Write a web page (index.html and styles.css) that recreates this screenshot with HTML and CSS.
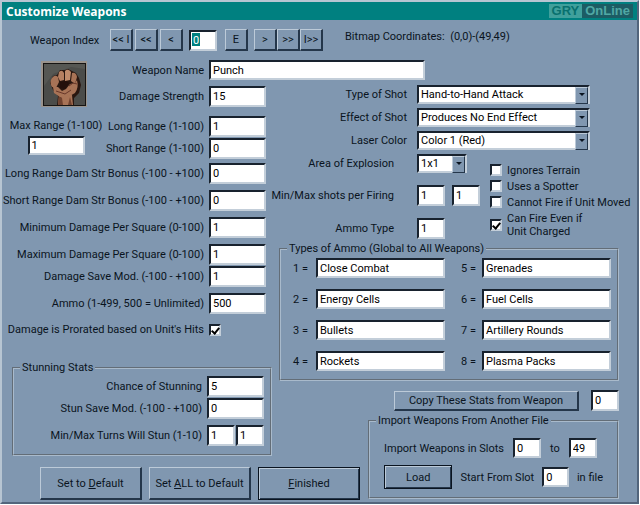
FILE: index.html
```
<!DOCTYPE html>
<html lang="en">

<head>
    <meta charset="UTF-8">
    <meta name="viewport" content="width=device-width, initial-scale=1.0">
    <title>Customize Weapons</title>
    <link rel="stylesheet" href="styles.css">
</head>

<body>
    <form class="window">
        <header class="titlebar">
            <h1>Customize Weapons</h1>
            <div class="brand"><span class="brand-left">GRY</span><span class="brand-right">OnLine</span></div>
        </header>

        <div class="toolbar">
            <label class="index-label" for="weaponIndex">Weapon Index</label>
            <div class="nav">
                <button type="button">&lt;&lt; I</button>
                <button type="button">&lt;&lt;</button>
                <button type="button">&lt;</button>
            </div>
            <input type="text" id="weaponIndex" class="small selected" value="0">
            <button type="button" class="edit">E</button>
            <div class="nav nav-next">
                <button type="button">&gt;</button>
                <button type="button">&gt;&gt;</button>
                <button type="button">I&gt;&gt;</button>
            </div>
            <span class="coords">Bitmap Coordinates:&nbsp; (0,0)-(49,49)</span>
        </div>

        <main class="content">
            <section class="left">
                <div class="top">
                    <div class="side">
                        <svg class="portrait" viewBox="0 0 46 46" aria-label="Punch">
                            <rect width="46" height="46" fill="#9a938c"/>
                            <rect x="2" y="2" width="43" height="43" fill="#161412"/>
                            <rect x="3" y="3" width="41" height="41" fill="#4b4c49"/>
                            <path d="M3 3h41v5L30 6 12 13 3 25z" fill="#565753"/>
                            <path d="M16 44l1-9-5-6-3-7 3-7 4-1 3-5 5 0 3-1 4 2 4 2 3 5 2 7-2 8-5 5 0 7z" fill="#2a1710"/>
                            <path d="M17 44l1-10h13l1 10z" fill="#a87356"/>
                            <path d="M18 34l3 3 1 7h-5zM29 36l2 8h-4z" fill="#70422f"/>
                            <path d="M11 17q3-4 6-1l1 5-3 6-4-1q-3-5 0-9z" fill="#a87356"/>
                            <path d="M18 11q3-3 5 1l0 7-4 1-2-4z" fill="#b57f60"/>
                            <path d="M24 10q3-3 6 1l-1 8-5 1z" fill="#c08b6b"/>
                            <path d="M31 12q4-1 5 4l-2 7-4-3z" fill="#a87356"/>
                            <path d="M12 26l5 0 4 4 4-2 4-5 5-1 2-3q2 8-2 13l-7 4h-8l-6-4z" fill="#a87356"/>
                            <path d="M19 21l6-1 3 2-4 6-5-1z" fill="#24100b"/>
                            <path d="M15 30l6 2 3 1 6-4M28 25l4-3 4 1" fill="none" stroke="#68382a"/>
                        </svg>
                        <label for="maxRange">Max Range (1-100)</label>
                        <input type="text" id="maxRange" value="1">
                    </div>
                    <div class="fields">
                        <div class="row name-row">
                            <label for="weaponName">Weapon Name</label>
                            <input type="text" id="weaponName" value="Punch">
                        </div>
                        <div class="row">
                            <label for="strength">Damage Strength</label>
                            <input type="text" id="strength" value="15">
                        </div>
                        <div class="row spaced">
                            <label for="longRange">Long Range (1-100)</label>
                            <input type="text" id="longRange" value="1">
                        </div>
                        <div class="row tight">
                            <label for="shortRange">Short Range (1-100)</label>
                            <input type="text" id="shortRange" value="0">
                        </div>
                    </div>
                </div>
                <div class="row">
                    <label for="longBonus">Long Range Dam Str Bonus (-100 - +100)</label>
                    <input type="text" id="longBonus" value="0">
                </div>
                <div class="row">
                    <label for="shortBonus">Short Range Dam Str Bonus (-100 - +100)</label>
                    <input type="text" id="shortBonus" value="0">
                </div>
                <div class="row">
                    <label for="minDamage">Minimum Damage Per Square (0-100)</label>
                    <input type="text" id="minDamage" value="1">
                </div>
                <div class="row">
                    <label for="maxDamage">Maximum Damage Per Square (0-100)</label>
                    <input type="text" id="maxDamage" value="1">
                </div>
                <div class="row tight">
                    <label for="saveMod">Damage Save Mod. (-100 - +100)</label>
                    <input type="text" id="saveMod" value="1">
                </div>
                <div class="row">
                    <label for="ammo">Ammo (1-499, 500 = Unlimited)</label>
                    <input type="text" id="ammo" value="500">
                </div>
                <div class="row spaced">
                    <label for="prorated">Damage is Prorated based on Unit's Hits</label>
                    <input type="checkbox" id="prorated" checked>
                </div>

                <fieldset class="stun">
                    <legend>Stunning Stats</legend>
                    <div class="row">
                        <label for="stunChance">Chance of Stunning</label>
                        <input type="text" id="stunChance" value="5">
                    </div>
                    <div class="row tight">
                        <label for="stunSave">Stun Save Mod. (-100 - +100)</label>
                        <input type="text" id="stunSave" value="0">
                    </div>
                    <div class="row">
                        <label for="stunMin">Min/Max Turns Will Stun (1-10)</label>
                        <div class="pair">
                            <input type="text" id="stunMin" value="1">
                            <input type="text" aria-label="Max turns" value="1">
                        </div>
                    </div>
                </fieldset>

                <div class="actions">
                    <button type="button">Set to <u>D</u>efault</button>
                    <button type="button">Set <u>A</u>LL to Default</button>
                    <button type="button" class="default"><u>F</u>inished</button>
                </div>
            </section>

            <section class="right">
                <div class="combo-row">
                    <label for="shotType">Type of Shot</label>
                    <div class="combo"><select id="shotType"><option>Hand-to-Hand Attack</option></select></div>
                </div>
                <div class="combo-row">
                    <label for="shotEffect">Effect of Shot</label>
                    <div class="combo"><select id="shotEffect"><option>Produces No End Effect</option></select></div>
                </div>
                <div class="combo-row">
                    <label for="laserColor">Laser Color</label>
                    <div class="combo"><select id="laserColor"><option>Color 1 (Red)</option></select></div>
                </div>

                <div class="options">
                    <div class="shots">
                        <label for="area">Area of Explosion</label>
                        <div class="combo combo-small"><select id="area"><option>1x1</option></select></div>
                        <label for="minShots">Min/Max shots per Firing</label>
                        <div class="shot-inputs">
                            <input type="text" id="minShots" class="small" value="1">
                            <input type="text" aria-label="Max shots" class="small" value="1">
                        </div>
                        <label for="ammoType">Ammo Type</label>
                        <input type="text" id="ammoType" class="small" value="1">
                    </div>
                    <div class="checks">
                        <label><input type="checkbox">Ignores Terrain</label>
                        <label><input type="checkbox">Uses a Spotter</label>
                        <label><input type="checkbox">Cannot Fire if Unit Moved</label>
                        <label class="two-line"><input type="checkbox" checked><span>Can Fire Even if<br>Unit Charged</span></label>
                    </div>
                </div>

                <fieldset class="ammo">
                    <legend>Types of Ammo (Global to All Weapons)</legend>
                    <div class="ammo-grid">
                        <label for="ammo1">1 =</label><input type="text" id="ammo1" value="Close Combat">
                        <label for="ammo5">5 =</label><input type="text" id="ammo5" value="Grenades">
                        <label for="ammo2">2 =</label><input type="text" id="ammo2" value="Energy Cells">
                        <label for="ammo6">6 =</label><input type="text" id="ammo6" value="Fuel Cells">
                        <label for="ammo3">3 =</label><input type="text" id="ammo3" value="Bullets">
                        <label for="ammo7">7 =</label><input type="text" id="ammo7" value="Artillery Rounds">
                        <label for="ammo4">4 =</label><input type="text" id="ammo4" value="Rockets">
                        <label for="ammo8">8 =</label><input type="text" id="ammo8" value="Plasma Packs">
                    </div>
                </fieldset>

                <div class="copy">
                    <button type="button">Copy These Stats from Weapon</button>
                    <input type="text" aria-label="Copy from weapon" class="small" value="0">
                </div>

                <fieldset class="import">
                    <legend>Import Weapons From Another File</legend>
                    <div class="import-row">
                        <label for="slotFrom">Import Weapons in Slots</label>
                        <input type="text" id="slotFrom" class="small" value="0">
                        <label for="slotTo">to</label>
                        <input type="text" id="slotTo" class="small" value="49">
                    </div>
                    <div class="import-row load-row">
                        <button type="button" class="default">Load</button>
                        <label for="startSlot">Start From Slot</label>
                        <input type="text" id="startSlot" class="small" value="0">
                        <span>in file</span>
                    </div>
                </fieldset>
            </section>
        </main>
    </form>
</body>

</html>
```
FILE: styles.css
```
* {
    box-sizing: border-box;
}

body {
    margin: 0;
    background-color: #fff;
    color: #0a1420;
    font-family: Roboto, Arial, sans-serif;
    font-size: 11px;
    line-height: 13px;
}

.window {
    margin: 0 1px 0 0;
    background-color: #8097b0;
    border: 2px solid #b7c5d2;
    border-right-color: #52657c;
    border-bottom-color: #52657c;
}

.titlebar {
    display: flex;
    justify-content: space-between;
    align-items: center;
    height: 18px;
    padding: 0 4px;
    background-color: #008080;
}

h1 {
    margin: 0;
    color: #fff;
    font-family: "Open Sans", sans-serif;
    font-size: 12px;
    font-weight: bold;
}

.brand {
    display: flex;
    color: #50a8a4;
    font-family: "Liberation Sans", Arial, sans-serif;
    font-size: 13px;
    font-weight: bold;
    line-height: 14px;
}

.brand span {
    padding: 0 3px;
}

.brand-left {
    background-color: #40a09c;
    color: #08706e;
}

.brand-right {
    background-color: #1c5c64;
}

label,
legend,
span {
    white-space: nowrap;
}

input[type="text"],
select {
    min-width: 0;
    height: 21px;
    margin: 0;
    padding: 0 2px;
    background-color: #fff;
    border: 2px solid #c3ced9;
    border-top-color: #18222e;
    border-left-color: #18222e;
    border-radius: 0;
    color: #000;
    font: inherit;
}

input.small {
    width: 28px;
}

input.selected {
    background-image: linear-gradient(#008080, #008080);
    background-position: 1px 1px;
    background-repeat: no-repeat;
    background-size: 8px 13px;
    color: #fff;
}

input[type="checkbox"] {
    position: relative;
    appearance: none;
    flex: none;
    width: 12px;
    height: 12px;
    margin: 0;
    background-color: #fff;
    border: 2px solid #c3ced9;
    border-top-color: #18222e;
    border-left-color: #18222e;
}

input[type="checkbox"]:checked::after {
    content: "";
    position: absolute;
    left: 2px;
    top: 0;
    width: 3px;
    height: 6px;
    border: solid #000;
    border-width: 0 2px 2px 0;
    transform: rotate(40deg);
}

button {
    padding: 0;
    background-color: #8097b0;
    border: 2px solid #24364a;
    border-top: 1px solid #bccad8;
    border-left: 1px solid #bccad8;
    border-radius: 0;
    color: #0a1420;
    font: inherit;
    white-space: nowrap;
}

button.default {
    border: 1px solid #0a1420;
    box-shadow: inset 1px 1px #bccad8, inset -1px -1px #24364a;
}

fieldset {
    min-width: 0;
    margin: 0;
    border: 2px groove #a9bacb;
}

legend {
    margin: 0;
    padding: 0 2px;
}

/* navigation between weapons */
.toolbar {
    display: flex;
    align-items: center;
    padding: 9px 0 9px 28px;
}

.index-label {
    width: 80px;
}

.nav {
    display: flex;
    gap: 2px;
}

.nav button,
.edit {
    width: 23px;
    height: 22px;
}

.nav-next {
    gap: 0;
    margin-left: 6px;
}

.toolbar .selected {
    margin: 0 8px 0 6px;
}

.coords {
    margin: 0 0 8px 22px;
}

.content {
    display: grid;
    grid-template-columns: 260px minmax(0, 1fr);
    gap: 7px;
    padding: 0 18px 2px 10px;
}

/* left column */
.top {
    display: flex;
    margin-bottom: 4px;
}

.side {
    display: flex;
    flex-direction: column;
    align-items: center;
    width: 88px;
}

.portrait {
    width: 46px;
    height: 46px;
    margin: 1px 0 12px 16px;
}

.side input {
    width: 57px;
    height: 19px;
    margin-top: 4px;
}

.fields {
    flex: 1;
}

.row {
    display: grid;
    grid-template-columns: minmax(0, 1fr) 57px;
    align-items: center;
    gap: 5px;
    margin: 6px 6px 0 0;
}

.row label {
    justify-self: end;
}

.row input[type="text"] {
    width: 100%;
}

.name-row {
    margin-top: 0;
}

.name-row input[type="text"] {
    width: 216px;
    height: 20px;
}

.top + .row {
    margin-top: 0;
}

.tight {
    margin-top: 1px;
}

.spaced {
    margin-top: 9px;
}

.stun {
    margin-top: 25px;
    padding: 2px 6px 8px;
}

.stun .row {
    margin-right: 0;
}

.stun legend + .row {
    margin-top: 0;
}

.pair {
    display: grid;
    grid-template-columns: 1fr 1fr;
    gap: 1px;
}

.actions {
    display: flex;
    gap: 7px;
    width: max-content;
    margin: 11px 0 0 28px;
}

.actions button {
    width: 102px;
    height: 33px;
}

/* right column */
.right {
    padding-top: 25px;
}

.combo-row {
    display: grid;
    grid-template-columns: 128px 173px;
    align-items: center;
    gap: 10px;
    margin-bottom: 4px;
}

.combo-row label,
.shots label {
    justify-self: end;
}

.combo {
    position: relative;
    display: flex;
}

.combo select {
    appearance: none;
    width: 100%;
    height: 19px;
}

.combo::before {
    content: "";
    position: absolute;
    top: 2px;
    right: 2px;
    width: 11px;
    height: 15px;
    background-color: #8097b0;
    border: 1px solid #24364a;
    border-top-color: #bccad8;
    border-left-color: #bccad8;
    pointer-events: none;
}

.combo::after {
    content: "";
    position: absolute;
    top: 8px;
    right: 5px;
    border: 3px solid transparent;
    border-top-color: #0a1420;
    border-bottom: 0;
    pointer-events: none;
}

.combo-small {
    width: 50px;
}

.options {
    display: flex;
    gap: 10px;
}

.shots {
    display: grid;
    grid-template-columns: 115px 63px;
    align-items: center;
    gap: 12px 23px;
}

.shot-inputs {
    display: flex;
    justify-content: space-between;
}

.checks {
    padding-top: 8px;
}

.checks label {
    display: flex;
    align-items: center;
    gap: 5px;
    height: 16px;
}

.checks .two-line {
    height: 26px;
    margin-top: 2px;
}

.ammo {
    margin-top: 3px;
    padding: 3px 6px 8px 12px;
}

.ammo legend {
    margin-left: -6px;
}

.ammo-grid {
    display: grid;
    grid-template-columns: 17px 1fr 25px 1fr;
    align-items: center;
    gap: 11px 6px;
}

.ammo-grid input[type="text"] {
    width: 100%;
    height: 20px;
}

.ammo-grid label:nth-of-type(even) {
    justify-self: end;
}

.copy {
    display: flex;
    justify-content: flex-end;
    align-items: center;
    gap: 12px;
    margin-top: 9px;
}

.copy button {
    width: 185px;
    height: 20px;
}

.import {
    width: 251px;
    margin: 3px 0 0 auto;
    padding: 11px 14px 8px;
}

.import legend {
    margin-left: -8px;
}

.import-row {
    display: flex;
    align-items: center;
    gap: 9px;
}

.import-row input[type="text"] {
    height: 20px;
}

.load-row {
    gap: 8px;
    margin-top: 7px;
}

.load-row button {
    width: 73px;
    height: 24px;
}
```
